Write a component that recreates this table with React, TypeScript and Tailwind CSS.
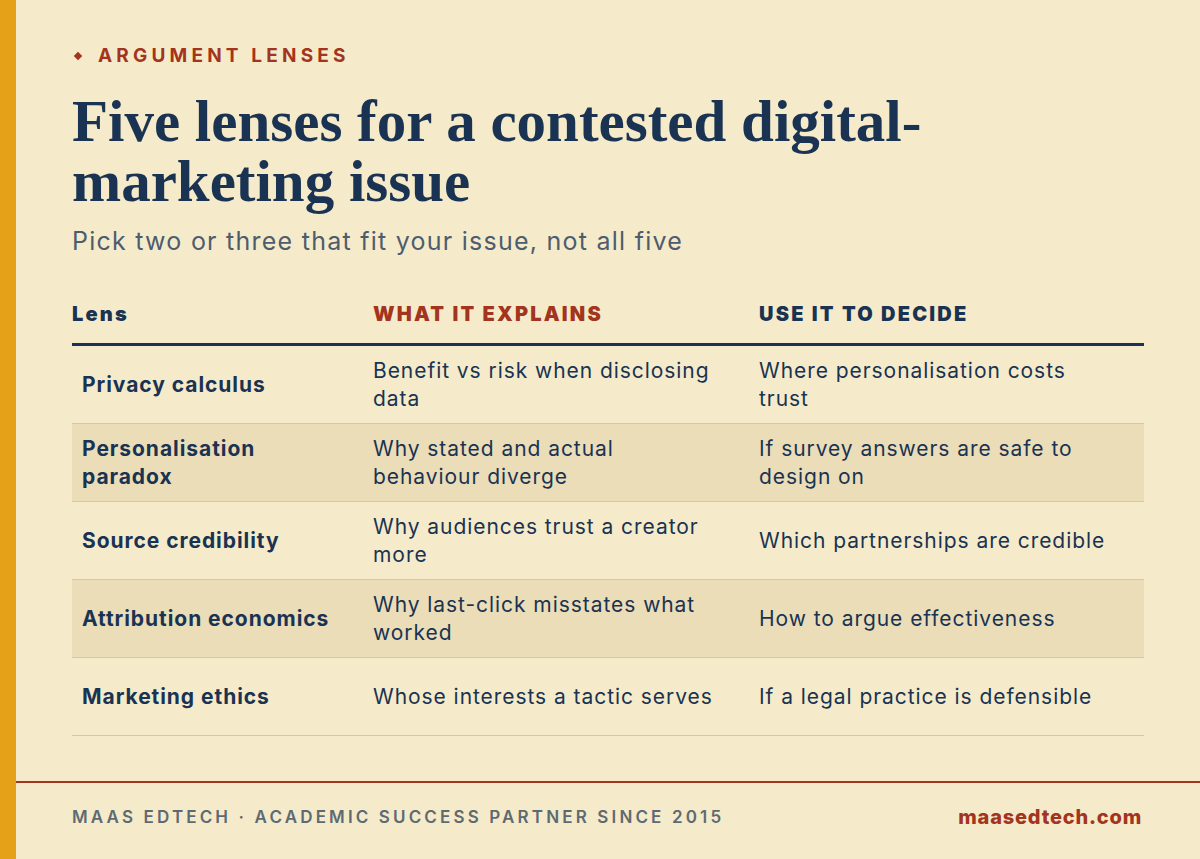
const rows = [
  {
    lens: ["Privacy calculus"],
    explains: ["Benefit vs risk when disclosing", "data"],
    decide: ["Where personalisation costs", "trust"],
  },
  {
    lens: ["Personalisation", "paradox"],
    explains: ["Why stated and actual", "behaviour diverge"],
    decide: ["If survey answers are safe to", "design on"],
  },
  {
    lens: ["Source credibility"],
    explains: ["Why audiences trust a creator", "more"],
    decide: ["Which partnerships are credible"],
  },
  {
    lens: ["Attribution economics"],
    explains: ["Why last-click misstates what", "worked"],
    decide: ["How to argue effectiveness"],
  },
  {
    lens: ["Marketing ethics"],
    explains: ["Whose interests a tactic serves"],
    decide: ["If a legal practice is defensible"],
  },
];

const sans = "font-['Inter','Liberation_Sans',sans-serif]";

const Lines = ({ lines }: { lines: string[] }) => (
  <>
    {lines.map((l, i) => (
      <span key={i} className="block whitespace-nowrap">
        {l}
      </span>
    ))}
  </>
);

export default function App() {
  return (
    <div className={`flex h-[859px] w-full bg-[#f5ebca] text-[#1a3352] ${sans}`}>
      {/* accent bar */}
      <div className="w-4 shrink-0 bg-[#e5a117]" />

      <div className="flex flex-1 flex-col">
        <main className="flex-1 px-[56px] pt-[44px]">
          {/* Eyebrow */}
          <div className="flex h-6 items-center">
            <span className="ml-[3px] mr-[17px] h-[6px] w-[6px] rotate-45 bg-[#a3341e]" />
            <span className="text-[19px] font-bold uppercase leading-6 tracking-[0.22em] text-[#a3341e]">
              Argument lenses
            </span>
          </div>

          {/* Title */}
          <h1 className="mt-[23px] font-['Liberation_Serif','Times_New_Roman',serif] text-[59px] font-bold leading-[60px] text-[#1a3352]">
            <span className="block whitespace-nowrap">Five lenses for a contested digital-</span>
            <span className="block whitespace-nowrap">marketing issue</span>
          </h1>
          <p className="mt-[14px] text-[25px] leading-8 tracking-[0.05em] text-[#4d5d6e]">
            Pick two or three that fit your issue, not all five
          </p>

          {/* Table */}
          <div className="mt-[45px]">
            <div className="grid grid-cols-[301px_386px_1fr] border-b-[3px] border-[#1a3352] pb-[17px] text-[20px] font-black leading-6 tracking-[0.11em]">
              <div className="text-[#1a3352]">Lens</div>
              <div className="text-[#a3341e]">WHAT IT EXPLAINS</div>
              <div className="text-[#1a3352]">USE IT TO DECIDE</div>
            </div>

            {rows.map((row, i) => (
              <div
                key={i}
                className={`grid grid-cols-[301px_386px_1fr] items-center border-b border-[#d5c9a5] pt-[11px] pb-[10px] text-[21px] leading-7 tracking-[0.045em] ${
                  i % 2 === 1 ? "bg-[#eaddb8]" : ""
                }`}
              >
                <div className="flex min-h-14 flex-col justify-center pl-[10px] font-bold">
                  <Lines lines={row.lens} />
                </div>
                <div className="flex min-h-14 flex-col justify-center">
                  <Lines lines={row.explains} />
                </div>
                <div className="flex min-h-14 flex-col justify-center">
                  <Lines lines={row.decide} />
                </div>
              </div>
            ))}
          </div>
        </main>

        {/* Footer */}
        <footer className="flex items-center justify-between border-t-2 border-[#a3341e] px-[56px] pt-[23px] pb-[31px] leading-[22px]">
          <span className="text-[17px] font-semibold uppercase tracking-[0.185em] text-[#5e6a72]">
            Maas Edtech · Academic Success Partner Since 2015
          </span>
          <span className="mr-[2px] text-[20px] font-extrabold tracking-[0.04em] text-[#a3341e]">
            maasedtech.com
          </span>
        </footer>
      </div>
    </div>
  );
}
